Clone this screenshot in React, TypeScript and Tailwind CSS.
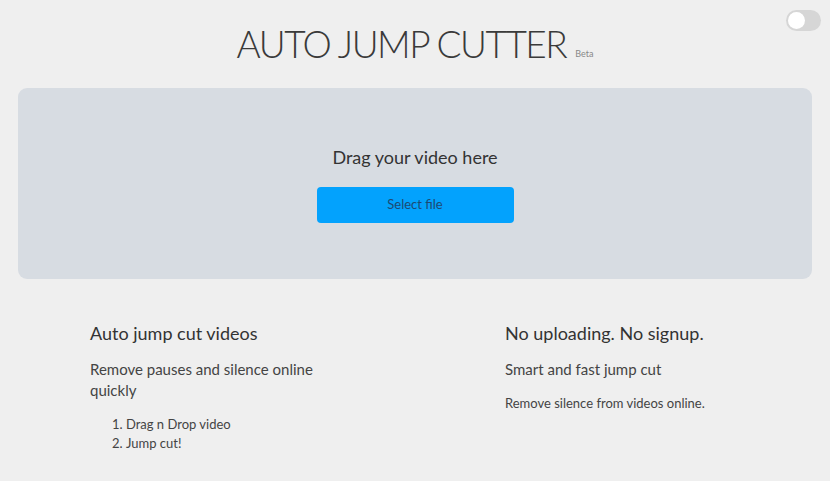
export default function App() {
  return (
    <div className="min-h-[481px] w-full bg-[#efefef] text-[#333] font-['Lato','Liberation_Sans',sans-serif] relative">
      {/* theme toggle */}
      <div className="absolute top-[10px] right-[9px] w-[35px] h-[21px] rounded-full bg-[#d6d6d6] p-[2px] flex items-center">
        <div className="w-[17px] h-[17px] rounded-full bg-white" />
      </div>

      <header className="flex justify-center items-end h-[88px] pb-[26px]">
        <h1 className="text-[37px] leading-none font-light tracking-[-1.5px] text-[#3a3a3a]">AUTO JUMP CUTTER</h1>
        <span className="ml-[9px] mb-[4px] text-[9px] leading-none text-[#888]">Beta</span>
      </header>

      <section className="mx-[18px] h-[191px] rounded-[9px] bg-[#d7dce2] flex flex-col items-center pt-[57px]">
        <p className="text-[18px] leading-[24px] text-[#333]">Drag your video here</p>
        <button className="mt-[18px] w-[197px] h-[36px] rounded-[4px] bg-[#03a2fd] text-[13px] text-[#1d4a73]">
          Select file
        </button>
      </section>

      <div className="flex pt-[41px]">
        <div className="w-[415px] pl-[90px]">
          <h2 className="text-[18px] leading-[26px] text-[#333]">Auto jump cut videos</h2>
          <p className="mt-[13px] w-[245px] text-[15px] leading-[21px] text-[#444]">
            Remove pauses and silence online quickly
          </p>
          <ol className="mt-[14px] pl-[22px] list-decimal list-inside text-[13px] leading-[19px] text-[#444]">
            <li>Drag n Drop video</li>
            <li>Jump cut!</li>
          </ol>
        </div>
        <div className="pl-[90px]">
          <h2 className="text-[18px] leading-[26px] text-[#333]">No uploading. No signup.</h2>
          <p className="mt-[13px] text-[15px] leading-[21px] text-[#444]">Smart and fast jump cut</p>
          <p className="mt-[14px] text-[13px] leading-[19px] text-[#444]">Remove silence from videos online.</p>
        </div>
      </div>
    </div>
  );
}
